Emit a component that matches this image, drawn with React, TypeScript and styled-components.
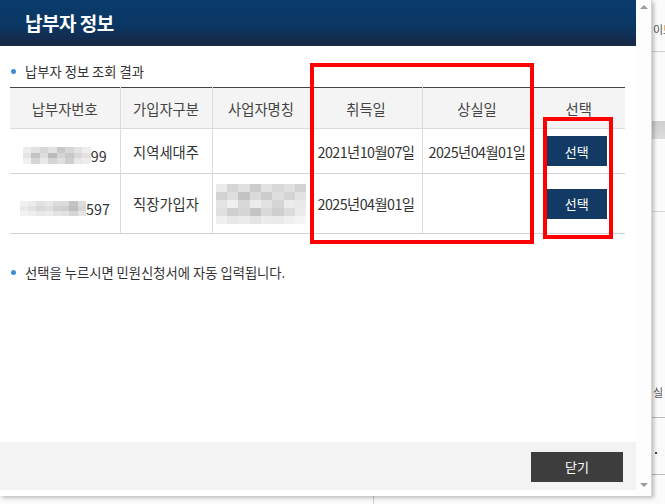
import React from "react";
import styled, { createGlobalStyle } from "styled-components";

const GlobalStyle = createGlobalStyle`
  html, body { margin: 0; padding: 0; background: #fbfbfb; }
  body { font-family: "Noto Sans CJK KR", "Noto Sans", sans-serif; color: #333; }
  * { box-sizing: border-box; }
`;

const Page = styled.div`
  display: flex;
  width: 665px;
  height: 504px;
  overflow: hidden;
  background: #fbfbfb;
`;

const LeftColumn = styled.div`
  display: flex;
  flex-direction: column;
  width: 652px;
  flex: none;
`;

const Modal = styled.div`
  display: flex;
  width: 652px;
  height: 496px;
  background: #fff;
  border-right: 1px solid #d6d6d6;
  box-shadow: 2px 2px 4px rgba(0, 0, 0, 0.25);
  position: relative;
  z-index: 1;
`;

const Content = styled.div`
  position: relative;
  width: 636px;
  display: flex;
  flex-direction: column;
`;

const Header = styled.div`
  height: 46px;
  display: flex;
  align-items: center;
  padding-left: 25px;
  background: linear-gradient(#0a3b6c 0%, #0b3764 55%, #142a4b 88%, #1a2a44 100%);
  color: #fff;
  font-size: 19px;
  font-weight: 700;
  letter-spacing: -0.5px;
  padding-bottom: 2px;
`;

const Body = styled.div`
  flex: 1;
  padding: 0 11px 0 10px;
`;

const Bulleted = styled.div<{ $top: number }>`
  display: flex;
  align-items: center;
  margin-top: ${(p) => p.$top}px;
  height: 16px;
  font-size: 13.3px;
  color: #333;
  letter-spacing: 0;
  &::before {
    content: "";
    width: 5px;
    height: 5px;
    border-radius: 50%;
    background: #3d8fd1;
    margin: 0 9px 0 1px;
    flex: none;
  }
`;

const Table = styled.table`
  width: 615px;
  margin-top: 8px;
  border-collapse: collapse;
  table-layout: fixed;
  border-top: 1px solid #444;
  border-bottom: 1px solid #444;
`;

const Th = styled.th`
  height: 41px;
  background: #f4f4f4;
  font-weight: 400;
  font-size: 14.3px;
  color: #444;
  border-bottom: 1px solid #dcdcdc;
  border-left: 1px solid #dcdcdc;
  padding: 0;
  &:first-child { border-left: none; }
`;

const Td = styled.td<{ $h: number; $tight?: boolean }>`
  height: ${(p) => p.$h}px;
  text-align: center;
  font-size: 14.3px;
  color: #333;
  border-left: 1px solid #dcdcdc;
  border-bottom: 1px solid #d4d4d4;
  padding: 0;
  letter-spacing: ${(p) => (p.$tight ? "-0.55px" : "0")};
  white-space: nowrap;
  &:first-child { border-left: none; }
`;

const NumberCell = styled.span`
  display: inline-flex;
  align-items: center;
`;

const MosaicGrid = styled.span<{ $cols: number; $cw: number; $ch: number }>`
  display: inline-grid;
  grid-template-columns: repeat(${(p) => p.$cols}, ${(p) => p.$cw}px);
  grid-auto-rows: ${(p) => p.$ch}px;
  filter: blur(0.6px);
  vertical-align: middle;
`;

const MosaicCell = styled.span<{ $shade: number }>`
  background: rgb(${(p) => p.$shade}, ${(p) => p.$shade}, ${(p) => p.$shade});
`;

const Mosaic: React.FC<{ shades: number[][]; cw: number; ch: number }> = ({ shades, cw, ch }) => (
  <MosaicGrid $cols={shades[0].length} $cw={cw} $ch={ch}>
    {shades.flatMap((row, r) => row.map((s, c) => <MosaicCell key={`${r}-${c}`} $shade={s} />))}
  </MosaicGrid>
);

const SelectButton = styled.button`
  width: 60px;
  height: 30px;
  border: none;
  background: #123a64;
  color: #fff;
  font-family: inherit;
  font-size: 13px;
  padding: 0;
  margin-right: 4px;
  cursor: pointer;
`;

const Footer = styled.div`
  height: 48px;
  background: #f3f3f3;
  display: flex;
  justify-content: flex-end;
  align-items: center;
  padding-right: 13px;
  padding-top: 1px;
`;

const CloseButton = styled.button`
  width: 92px;
  height: 30px;
  border: none;
  background: #3d3d3d;
  color: #fff;
  font-family: inherit;
  font-size: 13px;
  padding: 0;
`;

const BottomGap = styled.div`
  height: 6px;
  background: #fff;
`;

const Highlight = styled.div<{ $l: number; $t: number; $w: number; $h: number }>`
  position: absolute;
  left: ${(p) => p.$l}px;
  top: ${(p) => p.$t}px;
  width: ${(p) => p.$w}px;
  height: ${(p) => p.$h}px;
  border: 4px solid #ff0000;
  pointer-events: none;
`;

const Scrollbar = styled.div`
  width: 15px;
  display: flex;
  flex-direction: column;
  justify-content: space-between;
  align-items: center;
  padding: 5px 0 9px;
  background: #fdfdfd;
`;

const Arrow = styled.span<{ $down?: boolean }>`
  width: 0;
  height: 0;
  border-left: 4px solid transparent;
  border-right: 4px solid transparent;
  ${(p) => (p.$down ? "border-top: 4px solid #9a9a9a;" : "border-bottom: 4px solid #9a9a9a;")}
`;

const BelowStrip = styled.div`
  flex: 1;
  display: flex;
  background: #fbfbfb;
`;

const BelowSpacer = styled.div`
  width: 373px;
`;

const BelowLine = styled.div`
  border-left: 1px solid #cfcfcf;
`;

const BackStrip = styled.div`
  flex: 1;
  display: flex;
  flex-direction: column;
  background: #fbfbfb;
  overflow: hidden;
`;

const BackText = styled.div<{ $top: number }>`
  margin-top: ${(p) => p.$top}px;
  font-size: 11px;
  line-height: 12px;
  color: #555;
  white-space: nowrap;
  padding-left: 1px;
`;

const BackLine = styled.div<{ $top: number; $color?: string }>`
  margin-top: ${(p) => p.$top}px;
  border-top: 1px solid ${(p) => p.$color ?? "#d0d0d0"};
`;

const BackBand = styled.div<{ $top: number }>`
  margin-top: ${(p) => p.$top}px;
  height: 18px;
  background: linear-gradient(#cfcfcf, #dcdcdc);
`;

const BackDot = styled.div<{ $top: number }>`
  margin-top: ${(p) => p.$top}px;
  width: 2px;
  height: 2px;
  background: #444;
  margin-left: 3px;
`;

const num1 = [
  [236, 226, 214, 226, 200, 214, 226, 238],
  [228, 196, 222, 186, 212, 200, 216, 226],
  [240, 214, 232, 212, 224, 206, 232, 236],
];

const num2 = [
  [240, 236, 226, 232, 220, 218, 196, 222],
  [234, 226, 216, 222, 210, 206, 190, 214],
  [242, 238, 232, 236, 228, 226, 214, 230],
];

const company = [
  [234, 214, 224, 204, 226, 216, 224, 210],
  [210, 222, 196, 218, 204, 222, 212, 226],
  [228, 240, 216, 236, 226, 214, 236, 232],
  [224, 208, 214, 196, 218, 206, 220, 236],
  [240, 232, 236, 228, 236, 234, 240, 244],
];

export default function App() {
  return (
    <>
      <GlobalStyle />
      <Page>
        <LeftColumn>
          <Modal>
            <Content>
              <Header>납부자 정보</Header>
              <Body>
                <Bulleted $top={17}>납부자 정보 조회 결과</Bulleted>
                <Table>
                  <colgroup>
                    <col style={{ width: 110 }} />
                    <col style={{ width: 92 }} />
                    <col style={{ width: 98 }} />
                    <col style={{ width: 112 }} />
                    <col style={{ width: 110 }} />
                    <col style={{ width: 93 }} />
                  </colgroup>
                  <thead>
                    <tr>
                      <Th>납부자번호</Th>
                      <Th>가입자구분</Th>
                      <Th>사업자명칭</Th>
                      <Th>취득일</Th>
                      <Th>상실일</Th>
                      <Th>선택</Th>
                    </tr>
                  </thead>
                  <tbody>
                    <tr>
                      <Td $h={45}>
                        <NumberCell>
                          <Mosaic shades={num1} cw={8.5} ch={5.5} />
                          99
                        </NumberCell>
                      </Td>
                      <Td $h={45}>지역세대주</Td>
                      <Td $h={45}></Td>
                      <Td $h={45} $tight>2021년10월07일</Td>
                      <Td $h={45} $tight>2025년04월01일</Td>
                      <Td $h={45}>
                        <SelectButton>선택</SelectButton>
                      </Td>
                    </tr>
                    <tr>
                      <Td $h={60}>
                        <NumberCell>
                          <Mosaic shades={num2} cw={8.3} ch={5} />
                          597
                        </NumberCell>
                      </Td>
                      <Td $h={60}>직장가입자</Td>
                      <Td $h={60}>
                        <Mosaic shades={company} cw={11.3} ch={8} />
                      </Td>
                      <Td $h={60} $tight>2025년04월01일</Td>
                      <Td $h={60}></Td>
                      <Td $h={60}>
                        <SelectButton>선택</SelectButton>
                      </Td>
                    </tr>
                  </tbody>
                </Table>
                <Bulleted $top={30}>선택을 누르시면 민원신청서에 자동 입력됩니다.</Bulleted>
              </Body>
              <Footer>
                <CloseButton>닫기</CloseButton>
              </Footer>
              <BottomGap />
              <Highlight $l={310} $t={63} $w={224} $h={181} />
              <Highlight $l={543} $t={117} $w={70} $h={122} />
            </Content>
            <Scrollbar>
              <Arrow />
              <Arrow $down />
            </Scrollbar>
          </Modal>
          <BelowStrip>
            <BelowSpacer />
            <BelowLine />
          </BelowStrip>
        </LeftColumn>
        <BackStrip>
          <BackText $top={23}>이브</BackText>
          <BackLine $top={16} />
          <BackBand $top={69} />
          <BackLine $top={72} $color="#d8d8d8" />
          <BackText $top={174}>실</BackText>
          <BackLine $top={19} $color="#bbb" />
          <BackDot $top={34} />
          <BackLine $top={20} $color="#bbb" />
        </BackStrip>
      </Page>
    </>
  );
}
